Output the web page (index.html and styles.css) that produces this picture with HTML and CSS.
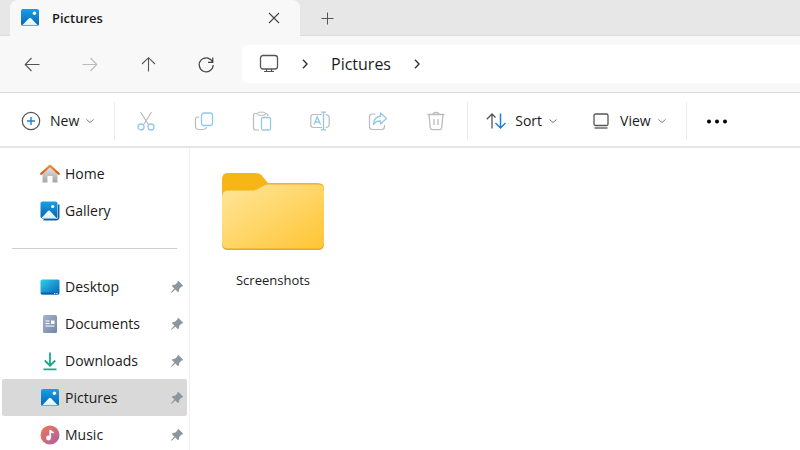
FILE: index.html
```html
<!DOCTYPE html>
<html lang="en">
<head>
<meta charset="utf-8">
<title>Pictures</title>
<link rel="stylesheet" href="styles.css">
</head>
<body>
<svg class="defs" aria-hidden="true">
  <defs>
    <linearGradient id="blue" x1="0" y1="0" x2="0" y2="1"><stop offset="0" stop-color="#16a0e6"/><stop offset="1" stop-color="#0a62b4"/></linearGradient>
    <linearGradient id="hill" x1="0" y1="0" x2="0" y2="1"><stop offset="0" stop-color="#fff"/><stop offset="1" stop-color="#d8effb"/></linearGradient>
    <linearGradient id="roof" x1="0" y1="0" x2="0" y2="1"><stop offset="0" stop-color="#f48a2c"/><stop offset="1" stop-color="#d4540c"/></linearGradient>
    <linearGradient id="wall" x1="0" y1="0" x2="0" y2="1"><stop offset="0" stop-color="#e6e6e6"/><stop offset="1" stop-color="#a6a6a8"/></linearGradient>
    <linearGradient id="desk" x1="0" y1="0" x2="1" y2="1"><stop offset="0" stop-color="#2fd0e4"/><stop offset="1" stop-color="#0a62bd"/></linearGradient>
    <linearGradient id="doc" x1="0" y1="0" x2="1" y2="1"><stop offset="0" stop-color="#a3b4ce"/><stop offset="1" stop-color="#7286a6"/></linearGradient>
    <linearGradient id="music" x1="0" y1="0" x2="1" y2="1"><stop offset="0" stop-color="#ee7b4c"/><stop offset="1" stop-color="#ad5cac"/></linearGradient>
    <linearGradient id="front" x1="0" y1="0" x2="1" y2="1"><stop offset="0" stop-color="#ffe69c"/><stop offset="1" stop-color="#ffc533"/></linearGradient>
  </defs>
  <symbol id="i-picture" viewBox="0 0 20 20">
    <rect x="1" y="1" width="18" height="17" rx="2" fill="url(#blue)"/>
    <path d="M2 17.4 9 10.2Q10 9.4 11 10.2L18 17.4Z" fill="url(#hill)"/><circle cx="14.4" cy="5.2" r="1.7" fill="#fff"/>
  </symbol>
  <symbol id="i-pin" viewBox="0 0 14 14">
    <path d="M8.5 1 13 5.5Q12.8 6.9 11.3 6.8L9.2 8.9Q9.6 11 8 12.2L5.3 9.5 1.7 12.8.9 12.2 4.4 8.6 1.8 6Q3 4.4 5 4.8L7.2 2.7Q7.1 1.2 8.5 1Z" fill="#8b979f"/>
  </symbol>
  <symbol id="i-down" viewBox="0 0 8 6"><path d="m.5 1.5 3.5 3 3.5-3" fill="none" stroke="#777"/></symbol>
  <symbol id="i-right" viewBox="0 0 8 12"><path d="m2 1.8 4 4.2-4 4.2" fill="none" stroke="#333" stroke-width="1.4"/></symbol>
</svg>

<div class="tabs">
  <div class="tab">
    <svg class="icon"><use href="#i-picture"/></svg>
    <span class="tab-title">Pictures</span>
    <button class="close" aria-label="Close tab"><svg class="icon" viewBox="0 0 20 20"><path d="m5 5 10 10M15 5 5 15" fill="none" stroke="#444" stroke-width="1.1"/></svg></button>
  </div>
  <button class="add" aria-label="New tab"><svg class="icon" viewBox="0 0 20 20"><path d="M10.5 4.5v12M4.5 10.5h12" fill="none" stroke="#555"/></svg></button>
</div>

<nav class="navbar" aria-label="Navigation">
  <button class="nav-button" aria-label="Back"><svg class="icon" viewBox="0 0 20 20"><path d="M17.5 10.5h-14M9.5 4l-6.3 6.5 6.3 6.5" fill="none" stroke="#555" stroke-width="1.1"/></svg></button>
  <button class="nav-button" aria-label="Forward" disabled><svg class="icon" viewBox="0 0 20 20"><path d="M2.5 10.5h14M10.5 4l6.3 6.5-6.3 6.5" fill="none" stroke="#bbb" stroke-width="1.1"/></svg></button>
  <button class="nav-button" aria-label="Up"><svg class="icon" viewBox="0 0 20 20"><path d="M10.5 17.5v-14M4 10l6.5-6.3L17 10" fill="none" stroke="#555" stroke-width="1.1"/></svg></button>
  <button class="nav-button" aria-label="Refresh"><svg class="icon" viewBox="0 0 20 20"><path d="M16.8 8.5A7 7 0 1 0 17.2 11M16.8 3.5V8.3H12" fill="none" stroke="#444" stroke-width="1.2"/></svg></button>
  <div class="address">
    <svg class="icon" viewBox="0 0 20 20"><rect x="1.5" y="1.5" width="17" height="13.5" rx="2.500" fill="none" stroke="#555" stroke-width="1.3"/><path d="M7.500 15v2.300M12.500 15v2.300M5 17.500h10" fill="none" stroke="#555" stroke-width="1.2"/></svg>
    <svg class="crumb"><use href="#i-right"/></svg>
    <a class="place" href="#pictures">Pictures</a>
    <svg class="crumb"><use href="#i-right"/></svg>
  </div>
</nav>

<div class="toolbar" role="toolbar" aria-label="Commands">
  <div class="group new-group">
    <button class="command"><svg class="icon" viewBox="0 0 20 20"><circle cx="10" cy="10" r="8.7" fill="none" stroke="#555" stroke-width="1.2"/><path d="M10 6v8M6 10h8" stroke="#1f80d0" stroke-width="1.4"/></svg>New<svg class="caret"><use href="#i-down"/></svg></button>
  </div>
  <div class="group edit-group">
    <button class="tool" aria-label="Cut" disabled><svg class="icon" viewBox="0 0 20 20" fill="none"><path d="M4.5 1 12.3 13.5M15.5 1 7.7 13.5" stroke="#bbb" stroke-width="1.2"/><g stroke="#94c8ea" stroke-width="1.3"><circle cx="5" cy="16" r="3"/><circle cx="15" cy="16" r="3"/></g></svg></button>
    <button class="tool" aria-label="Copy" disabled><svg class="icon" viewBox="0 0 20 20" fill="none"><path d="M5 6H4Q1.5 6 1.5 8.5V15Q1.5 18.5 5 18.5H9Q12 18.5 12.5 16" stroke="#bbb" stroke-width="1.2"/><rect x="7.5" y="2" width="11" height="12.5" rx="2.5" stroke="#94c8ea" stroke-width="1.3"/></svg></button>
    <button class="tool" aria-label="Paste" disabled><svg class="icon" viewBox="0 0 20 20" fill="none"><path d="M5.5 2.5H3.5Q1.5 2.5 1.5 4.5V17Q1.5 19 3.5 19H7M13.5 2.5Q16 2.5 16 5" stroke="#bbb" stroke-width="1.2"/><rect x="5.5" y="1.2" width="8" height="3" rx="1.5" stroke="#bbb"/><rect x="9.500" y="6.5" width="9" height="12.5" rx="1.5" stroke="#94c8ea" stroke-width="1.3"/></svg></button>
    <button class="tool" aria-label="Rename" disabled><svg class="icon" viewBox="0 0 20 20" fill="none"><path d="M12 3.5H3.5Q.8 3.5.8 6.2V13.8Q.8 16.5 3.5 16.5H12M15.5 3.5Q19.2 3.5 19.2 7V13Q19.2 16.5 15.5 16.5" stroke="#bbb" stroke-width="1.2"/><path d="M13.5 1.5V18.5M11 1.2H16M11 18.8H16M4 13.5 7.2 6 10.5 13.5M5.2 11H9.2" stroke="#94c8ea" stroke-width="1.3"/></svg></button>
    <button class="tool" aria-label="Share" disabled><svg class="icon" viewBox="0 0 20 20" fill="none"><path d="M7.5 3H4.5Q1.5 3 1.5 6V15.5Q1.5 18.5 4.5 18.5H13.5Q16.5 18.5 16.5 15.5V14" stroke="#bbb" stroke-width="1.2"/><path d="M12.5 2 18.5 7.5 12.5 13V10Q8 9.7 5.5 13.5 6 6 12.5 5Z" stroke="#94c8ea" stroke-width="1.3" stroke-linejoin="round"/></svg></button>
    <button class="tool" aria-label="Delete" disabled><svg class="icon" viewBox="0 0 20 20" fill="none"><path d="M1.5 3.5H18.5M7 3.5Q7 1.3 10 1.3T13 3.5M3 3.5 4.3 16.5Q4.5 18.7 6.5 18.7H13.5Q15.5 18.7 15.7 16.5L17 3.5M8 8V14M12 8V14" stroke="#bbb" stroke-width="1.3"/></svg></button>
  </div>
  <div class="group view-group">
    <button class="command"><svg class="icon" viewBox="0 0 20 20" fill="none"><path d="M6 17.5V3M.8 8.2 6 3 9.5 6.5" stroke="#555" stroke-width="1.3"/><path d="M14.5 2.5V17M9.5 12 14.5 17 19.5 12" stroke="#1f80d0" stroke-width="1.5"/></svg>Sort<svg class="caret"><use href="#i-down"/></svg></button>
    <button class="command"><svg class="icon" viewBox="0 0 20 20" fill="none"><rect x="3" y="3" width="14" height="11.5" rx="1.5" stroke="#555" stroke-width="1.3"/><path d="M3.5 17H16.5" stroke="#555" stroke-width="1.3"/></svg>View<svg class="caret"><use href="#i-down"/></svg></button>
  </div>
  <button class="more" aria-label="See more"><svg class="icon" viewBox="0 0 20 20"><circle cx="2" cy="10.5" r="2"/><circle cx="10" cy="10.5" r="2"/><circle cx="18" cy="10.5" r="2"/></svg></button>
</div>

<div class="body">
  <aside class="sidebar">
    <a class="row" href="#home"><svg class="icon" viewBox="0 0 20 20"><path d="M2.5 9 10 2 17.5 9V18.5H12.5V12H7.5V18.5H2.5Z" fill="url(#wall)"/><path d="M1.200 9.800 10 1.800 18.800 9.800" fill="none" stroke="url(#roof)" stroke-width="2.2" stroke-linejoin="round" stroke-linecap="round"/></svg>Home</a>
    <a class="row" href="#gallery"><svg class="icon" viewBox="0 0 20 20"><path d="M18.7 3.5V16Q18.7 18.7 16 18.7H3.5" fill="none" stroke="#0a62a8" stroke-width="1.5"/><rect x=".5" y=".5" width="17" height="17" rx="2" fill="url(#blue)"/><path d="M1.5 17 8 10Q9 9 10 10L16.5 17Z" fill="url(#hill)"/><circle cx="12.7" cy="5.5" r="1.6" fill="#fff"/></svg>Gallery</a>
    <hr>
    <a class="row" href="#desktop"><svg class="icon" viewBox="0 0 20 20"><rect x=".5" y="2.5" width="19" height="15" rx="1.5" fill="url(#desk)"/><path d="M1 15.5H19V16Q19 17.5 17.5 17.5H2.5Q1 17.5 1 16Z" fill="#0a5fae"/><path d="M14 16.5H18" stroke="#d6edfb" stroke-dasharray="1 .7"/></svg>Desktop<svg class="pin"><use href="#i-pin"/></svg></a>
    <a class="row" href="#documents"><svg class="icon" viewBox="0 0 20 20"><rect x="3" y="1" width="14" height="18" rx="1.5" fill="url(#doc)"/><path d="M5.5 7H9.5M5.5 9.5H9.5M5.5 12H14.5" stroke="#fff" stroke-width="1.2"/><path d="M11 6.5H14.5V10H11Z" fill="#fff"/></svg>Documents<svg class="pin"><use href="#i-pin"/></svg></a>
    <a class="row" href="#downloads"><svg class="icon" viewBox="0 0 20 20"><path d="M10 1.5V14.5M4.8 9.5 10 14.7 15.2 9.5M3.5 18.3H16.5" fill="none" stroke="#18aa84" stroke-width="1.8"/></svg>Downloads<svg class="pin"><use href="#i-pin"/></svg></a>
    <a class="row selected" href="#pictures" aria-current="page"><svg class="icon"><use href="#i-picture"/></svg>Pictures<svg class="pin"><use href="#i-pin"/></svg></a>
    <a class="row" href="#music"><svg class="icon" viewBox="0 0 20 20"><circle cx="10" cy="10" r="9.5" fill="url(#music)"/><circle cx="8.5" cy="13" r="2.4" fill="#fff"/><path d="M10.200 13V5Q11 7.500 13.800 7.500" fill="none" stroke="#fff" stroke-width="1.700"/></svg>Music<svg class="pin"><use href="#i-pin"/></svg></a>
  </aside>
  <main class="files">
    <a class="file" href="#screenshots">
      <svg class="folder" viewBox="0 0 104 80">
        <path d="M1 7Q1 1 7 1H34Q40 1 42 5L47 11H97Q103 11 103 17V60H1Z" fill="#f8b616"/>
        <path d="M1 25Q1 18.500 7 18.500H31Q35 18.500 38 16.500L43 13.500Q44.500 12.500 47 12.500H97Q103 12.500 103 19V72Q103 78 97 78H7Q1 78 1 72Z" fill="#e5a52a"/>
        <path d="M1 25Q1 18.500 7 18.500H31Q35 18.500 38 16.500L43 13.500Q44.500 12.500 47 12.500H97Q103 12.500 103 19V70.500Q103 76.500 97 76.500H7Q1 76.500 1 70.500Z" fill="url(#front)"/>
      </svg>
      <span class="file-name">Screenshots</span>
    </a>
  </main>
</div>
</body>
</html>
```
FILE: styles.css
```css
* { box-sizing: border-box; }

body {
  display: flex;
  flex-direction: column;
  height: 100vh;
  margin: 0;
  overflow: hidden;
  background: #fff;
  color: #1b1b1b;
  font: 14px/20px "Open Sans", "Noto Sans", sans-serif;
}

button {
  display: flex;
  align-items: center;
  justify-content: center;
  padding: 0;
  border: 0;
  background: none;
  color: inherit;
  font: inherit;
}

a { color: inherit; text-decoration: none; }
svg { display: block; flex: none; }
.defs { position: absolute; width: 0; height: 0; }
.icon { width: 20px; height: 20px; }
.caret { width: 8px; height: 6px; }
.crumb { width: 8px; height: 12px; }

/* Tab strip */
.tabs {
  display: flex;
  flex: none;
  height: 36px;
  padding-left: 10px;
  background: #e7e7e7;
  box-shadow: inset 0 -1px #dcdcdc;
}

.tab {
  display: flex;
  align-items: center;
  width: 290px;
  padding: 0 16px 0 10px;
  border-radius: 8px 8px 0 0;
  background: #f8f8f8;
}

.tab-title { flex: 1; margin-left: 12px; font-size: 13px; font-weight: 600; }
.add { width: 54px; }

/* Navigation bar */
.navbar {
  display: flex;
  flex: none;
  align-items: center;
  height: 57px;
  padding-left: 3px;
  border-bottom: 1px solid #dcdcdc;
  background: #f8f8f8;
}

.nav-button { width: 58px; height: 36px; }

.address {
  display: flex;
  flex: 1;
  align-items: center;
  height: 38px;
  margin-left: 7px;
  padding-left: 17px;
  border-radius: 5px 0 0 5px;
  background: #fff;
  font-size: 16px;
}

.address .crumb { margin: 0 22px; }

/* Command bar */
.toolbar {
  display: flex;
  flex: none;
  align-items: center;
  height: 55px;
  padding-top: 2px;
  border-bottom: 2px solid #e5e5e5;
}

.group {
  display: flex;
  align-items: center;
  height: 38px;
  border-right: 1px solid #ececec;
}

.command { gap: 9px; }
.command .caret { margin-left: -2px; }
.new-group { padding: 0 20px 0 21px; }
.edit-group { padding: 0 2px; }
.tool { width: 58px; height: 38px; }
.view-group { gap: 34px; padding: 0 20px 0 18px; }
.more { margin-left: 20px; }

/* Content */
.body { display: flex; flex: 1; min-height: 0; }

.sidebar {
  flex: none;
  width: 190px;
  padding: 7px 2px 0;
  border-right: 1px solid #f0f0f0;
}

.row {
  display: flex;
  align-items: center;
  gap: 5px;
  height: 37px;
  padding: 0 3px 0 38px;
  border-radius: 2px;
}

.row.selected { background: #d9d9d9; }
.pin { width: 14px; height: 14px; margin-left: auto; }

.sidebar hr {
  height: 1px;
  margin: 19px 10px;
  border: 0;
  background: #cfcfcf;
}

.files { flex: 1; padding: 24px 31px; }

.file {
  display: inline-flex;
  flex-direction: column;
  align-items: center;
  gap: 18px;
}

.folder { width: 104px; height: 80px; }
.file-name { font-size: 13px; }
```
